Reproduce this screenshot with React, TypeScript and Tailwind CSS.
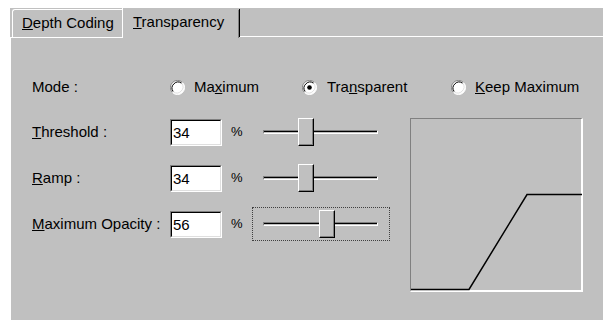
import React from 'react';

const font = { fontFamily: '"Liberation Sans", Arial, sans-serif' };

function Radio({ checked }: { checked?: boolean }) {
  return (
    <svg width="15" height="15" viewBox="0 0 15 15" className="shrink-0">
      <circle cx="7.5" cy="7.5" r="7" fill="#ffffff" />
      <path d="M2.5 12.5 A7 7 0 0 1 12.5 2.5" fill="none" stroke="#808080" strokeWidth="1" />
      <path d="M12.5 2.5 A7 7 0 0 1 2.5 12.5" fill="none" stroke="#ffffff" strokeWidth="1" />
      <path d="M3.3 11.7 A6 6 0 0 1 11.7 3.3" fill="none" stroke="#000000" strokeWidth="1" />
      <path d="M11.7 3.3 A6 6 0 0 1 3.3 11.7" fill="none" stroke="#dfdfdf" strokeWidth="1" />
      {checked && <circle cx="7.5" cy="7.5" r="2.3" fill="#000000" />}
    </svg>
  );
}

function Field({ value }: { value: string }) {
  return (
    <div className="w-[52px] h-[27px] border-t border-l border-t-[#808080] border-l-[#808080] border-b border-r border-b-white border-r-white">
      <div className="w-full h-full bg-white border-t border-l border-t-black border-l-black border-b border-r border-b-[#dfdfdf] border-r-[#dfdfdf] pl-[1px] text-[15px] leading-[23px] text-black">
        {value}
      </div>
    </div>
  );
}

function Slider({ value, focused }: { value: number; focused?: boolean }) {
  const left = Math.round((value / 100) * (115 - 16));
  return (
    <div
      className={
        'ml-[10px] w-[138px] h-[34px] flex items-center pl-[10px] ' +
        (focused ? 'border border-dotted border-[#404040]' : 'border border-transparent')
      }
    >
      <div className="relative w-[115px] h-[4px] border-t border-l border-t-[#808080] border-l-[#808080] border-b border-r border-b-white border-r-white">
        <div className="w-full h-[1px] bg-black" />
        <div
          className="absolute top-[-13px] w-[16px] h-[28px] border-t border-l border-t-white border-l-white border-b border-r border-b-black border-r-black"
          style={{ left }}
        >
          <div className="w-full h-full bg-[#c0c0c0] border-b border-r border-b-[#808080] border-r-[#808080]" />
        </div>
      </div>
    </div>
  );
}

function Row({ label, value }: { label: React.ReactNode; value: string }) {
  return (
    <div className="flex items-center h-[28px]">
      <div className="w-[138px] text-[15px]">{label}</div>
      <Field value={value} />
      <div className="ml-[9px] w-[11px] text-[13px]">%</div>
    </div>
  );
}

export default function App() {
  const rows = [
    { label: <><u>T</u>hreshold :</>, value: '34', num: 34 },
    { label: <><u>R</u>amp :</>, value: '34', num: 34 },
    { label: <><u>M</u>aximum Opacity :</>, value: '56', num: 56, focused: true },
  ];
  return (
    <div className="w-[603px] h-[320px] bg-white pt-[8px] pl-[10px] overflow-hidden text-black" style={font}>
      <div className="bg-[#c0c0c0] h-full flex flex-col">
        <div className="flex items-end h-[30px]">
          <div className="w-[2px] h-[1px] bg-[#ffffff] self-end" />
          <div className="w-[110px] h-[29px] border-t border-l border-white rounded-tl-[3px] border-b flex items-center pl-[9px] text-[15px]">
            <span><u>D</u>epth Coding</span>
          </div>
          <div className="w-[118px] h-[30px] border-l border-white flex">
            <div className="flex-1 flex items-center pl-[10px] text-[15px] pb-[1px]">
              <span><u>T</u>ransparency</span>
            </div>
            <div className="w-[1px] bg-[#808080] mt-[2px]" />
            <div className="w-[1px] bg-black mt-[1px] mb-[1px]" />
          </div>
          <div className="flex-1 h-[1px] bg-white mb-[1px]" />
        </div>
        <div className="flex-1 border-l border-white pl-[21px]">
          <div className="flex items-center h-[20px] mt-[39px] text-[15px]">
            <div className="w-[138px]">Mode :</div>
            <div className="w-[132px] flex items-center gap-[9px]">
              <Radio />
              <span>Ma<u>x</u>imum</span>
            </div>
            <div className="w-[149px] flex items-center gap-[10px]">
              <Radio checked />
              <span>Tra<u>n</u>sparent</span>
            </div>
            <div className="flex items-center gap-[9px]">
              <Radio />
              <span><u>K</u>eep Maximum</span>
            </div>
          </div>
          <div className="flex items-start mt-[18px]">
            <div className="flex flex-col gap-[12px]">
              {rows.map((r, i) => (
                <div key={i} className="flex items-center">
                  <Row label={r.label} value={r.value} />
                  <Slider value={r.num} focused={r.focused} />
                </div>
              ))}
            </div>
            <div className="ml-[20px] mt-[3px] w-[173px] h-[174px] border-t border-l border-t-[#808080] border-l-[#808080] border-b-2 border-r-2 border-b-white border-r-white">
              <svg width="171" height="172" viewBox="0 0 171 172" className="block">
                <polyline
                  points="0,170.5 58,170.5 116,75.5 171,75.5"
                  fill="none"
                  stroke="#000000"
                  strokeWidth="1.5"
                />
              </svg>
            </div>
          </div>
        </div>
      </div>
    </div>
  );
}
